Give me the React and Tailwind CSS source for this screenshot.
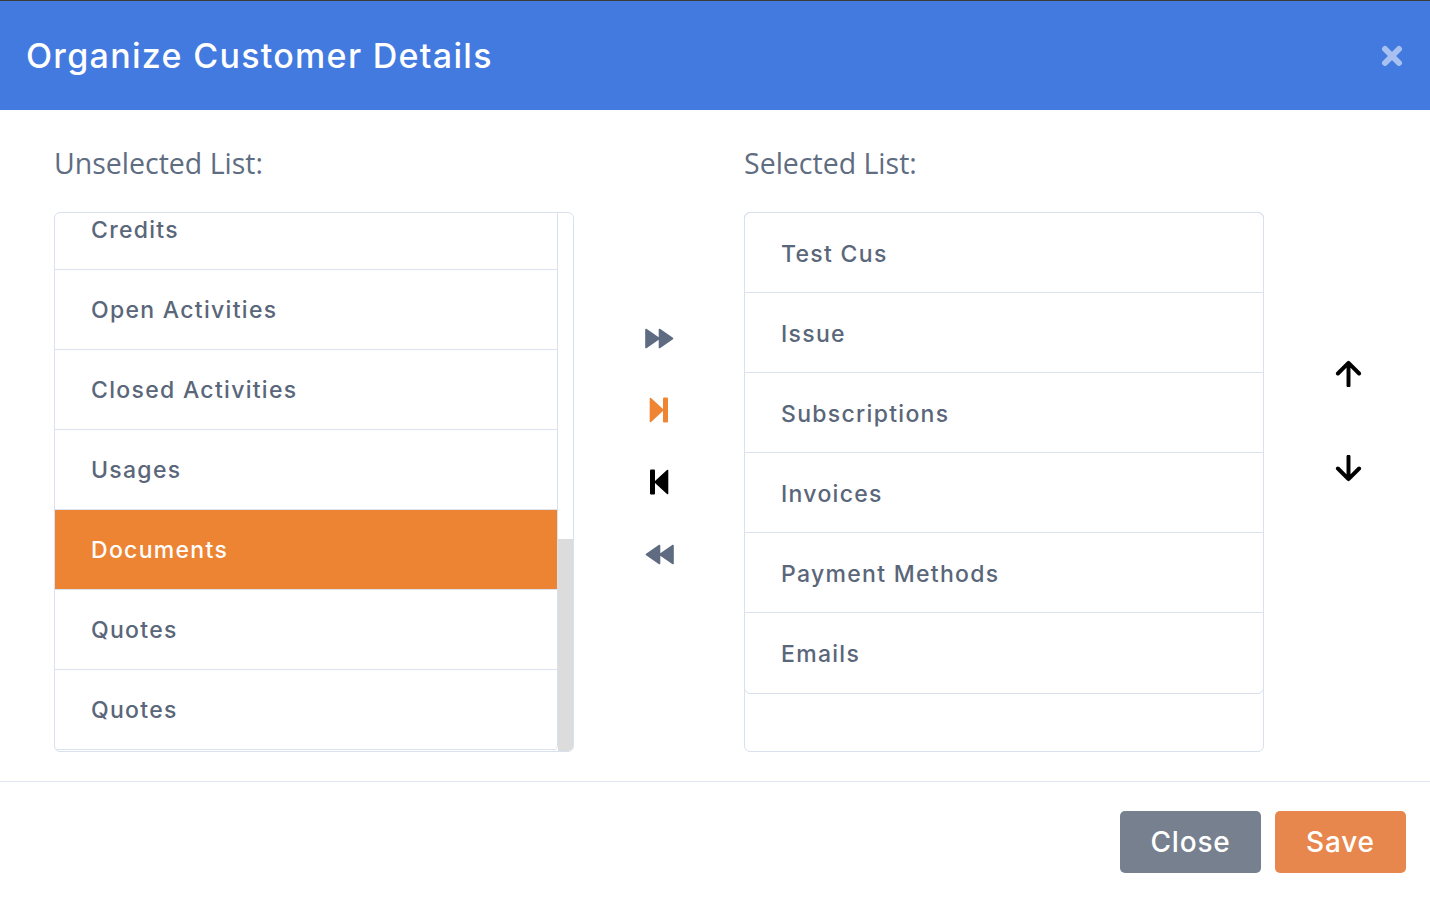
import React, { useState } from 'react';

const UNSELECTED = ['Credits', 'Open Activities', 'Closed Activities', 'Usages', 'Documents', 'Quotes', 'Quotes'];
const SELECTED = ['Test Cus', 'Issue', 'Subscriptions', 'Invoices', 'Payment Methods', 'Emails'];

const POPPINS = { fontFamily: 'Inter, "Noto Sans", sans-serif' };

function FastForward({ flip = false, color }) {
  return (
    <svg width="29" height="21" viewBox="0 0 29 21" style={flip ? { transform: 'scaleX(-1)' } : undefined}>
      <path d="M1 1.5 L14 10.5 L1 19.5 Z M14.5 1.5 L27.5 10.5 L14.5 19.5 Z" fill={color} stroke={color} strokeWidth="1.6" strokeLinejoin="round" />
    </svg>
  );
}

function StepForward({ flip = false, color }) {
  return (
    <svg width="20" height="26" viewBox="0 0 20 26" style={flip ? { transform: 'scaleX(-1)' } : undefined}>
      <path d="M1.5 1.5 L14 13 L1.5 24.5 Z" fill={color} stroke={color} strokeWidth="1.6" strokeLinejoin="round" />
      <rect x="14" y="0.5" width="5" height="25" rx="1" fill={color} />
    </svg>
  );
}

function Arrow({ down = false }) {
  return (
    <svg width="27" height="27" viewBox="0 0 26 26" style={down ? { transform: 'scaleY(-1)' } : undefined}>
      <path d="M2.8 13 L13 2.8 L23.2 13 M13 3 V24.5" fill="none" stroke="#000" strokeWidth="3.8" strokeLinecap="round" strokeLinejoin="round" />
    </svg>
  );
}

export default function App() {
  const [active, setActive] = useState(4);

  return (
    <div className="w-[1430px] h-[902px] bg-white border-t border-[#3a3a3a] flex flex-col overflow-hidden" style={POPPINS}>
      {/* header */}
      <div className="h-[109px] bg-[#437adf] flex items-center justify-between pl-[26px] pr-[27px]">
        <h1 className="text-white text-[34px] font-medium tracking-[1.3px]">Organize Customer Details</h1>
        <button>
          <svg width="22" height="22" viewBox="0 0 22 22">
            <path d="M4 4 L18 18 M18 4 L4 18" stroke="#a9c1f1" strokeWidth="6" strokeLinecap="round" />
          </svg>
        </button>
      </div>

      {/* body */}
      <div className="flex pl-[54px] pt-[35px] pb-[29px] border-b border-[#dfe5ee]">
        {/* unselected */}
        <div className="w-[520px] flex flex-col">
          <div className="h-[36px] leading-[36px] mb-[31px] text-[28.5px] text-[#5f6d82]" style={{ fontFamily: '"Open Sans", sans-serif' }}>
            Unselected List:
          </div>
          <div className="h-[540px] border border-[#d9e1ec] rounded-[6px] flex overflow-hidden">
            <div className="flex-1 border-r border-[#d9e1ec] rounded-br-[6px] overflow-hidden">
              <div className="-mt-[23px]">
                {UNSELECTED.map((name, i) => (
                  <div
                    key={i}
                    onClick={() => setActive(i)}
                    className={`h-[80px] border-b border-[#dbe3ee] flex items-center pl-[36px] pt-[2px] text-[23px] font-medium tracking-[1.3px] cursor-pointer ${
                      active === i ? 'bg-[#ed8434] text-white' : 'text-[#5a6679]'
                    }`}
                  >
                    {name}
                  </div>
                ))}
              </div>
            </div>
            <div className="w-[15px] flex flex-col">
              <div className="flex-1" />
              <div className="h-[212px] bg-[#dcdcdc]" />
            </div>
          </div>
        </div>

        {/* move buttons */}
        <div className="w-[170px] flex flex-col items-center pt-[157px]">
          <div className="h-[72px] flex items-center justify-center"><FastForward color="#5e6b80" /></div>
          <div className="h-[72px] flex items-center justify-center"><StepForward color="#ef8533" /></div>
          <div className="h-[72px] flex items-center justify-center"><StepForward flip color="#000" /></div>
          <div className="h-[72px] flex items-center justify-center"><FastForward flip color="#5e6b80" /></div>
        </div>

        {/* selected */}
        <div className="w-[520px] flex flex-col">
          <div className="h-[36px] leading-[36px] mb-[31px] text-[28.5px] text-[#5f6d82]" style={{ fontFamily: '"Open Sans", sans-serif' }}>
            Selected List:
          </div>
          <div className="h-[540px] border border-[#d9e1ec] rounded-[6px]">
            <div className="border border-[#d9e1ec] rounded-[6px] -m-px">
              {SELECTED.map((name, i) => (
                <div
                  key={i}
                  className={`h-[80px] flex items-center pl-[36px] pt-[3px] text-[23px] font-medium tracking-[1.3px] text-[#5a6679] ${
                    i < SELECTED.length - 1 ? 'border-b border-[#dbe3ee]' : ''
                  }`}
                >
                  {name}
                </div>
              ))}
            </div>
          </div>
        </div>

        {/* order buttons */}
        <div className="flex-1 flex flex-col items-center pl-[2px] pt-[181px]">
          <div className="h-[95px] flex items-center justify-center"><Arrow /></div>
          <div className="h-[95px] flex items-center justify-center"><Arrow down /></div>
        </div>
      </div>

      {/* footer */}
      <div className="flex justify-end gap-[14px] pt-[29px] pr-[24px]">
        <button className="w-[141px] h-[62px] rounded-[5px] bg-[#76808f] text-white text-[28px] font-medium tracking-[0.8px]">Close</button>
        <button className="w-[131px] h-[62px] rounded-[5px] bg-[#e7874d] text-white text-[28px] font-medium tracking-[0.8px]">Save</button>
      </div>
    </div>
  );
}
